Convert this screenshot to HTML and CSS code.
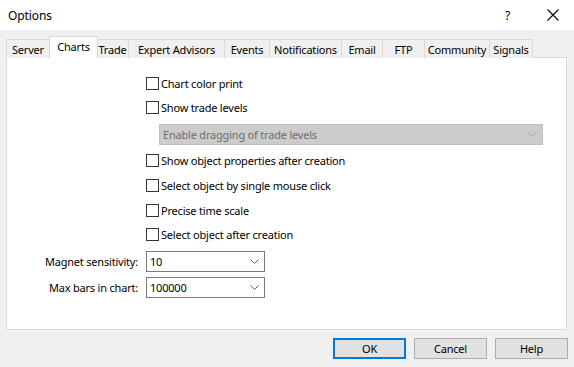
FILE: index.html
```html
<!DOCTYPE html>
<html>
<head>
<meta charset="utf-8">
<link rel="stylesheet" href="styles.css">
</head>
<body>
<div class="window">
  <div class="titlebar">
    <span class="title">Options</span>
    <span class="help-glyph">?</span>
    <svg class="close" width="12" height="12" viewBox="0 0 12 12"><path d="M0.5 0.5 L11.5 11.5 M11.5 0.5 L0.5 11.5" stroke="#000" stroke-width="1.1" fill="none"/></svg>
  </div>
  <div class="client">
    <div class="tabs">
      <div class="tab t-server">Server</div>
      <div class="tab t-charts active">Charts</div>
      <div class="tab t-trade">Trade</div>
      <div class="tab t-ea">Expert Advisors</div>
      <div class="tab t-events">Events</div>
      <div class="tab t-notif">Notifications</div>
      <div class="tab t-email">Email</div>
      <div class="tab t-ftp">FTP</div>
      <div class="tab t-comm">Community</div>
      <div class="tab t-signals">Signals</div>
    </div>
    <div class="panel">
      <div class="checks">
        <label class="row r24"><span class="box"></span>Chart color print</label>
        <label class="row r24"><span class="box"></span>Show trade levels</label>
        <div class="combo disabled wide"><span class="val">Enable dragging of trade levels</span>
          <svg class="chev" width="9" height="5" viewBox="0 0 9 5"><path d="M0.5 0.5 L4.5 4.5 L8.5 0.5" stroke="#a3a3a3" fill="none"/></svg>
        </div>
        <label class="row r25 first"><span class="box"></span>Show object properties after creation</label>
        <label class="row r25"><span class="box"></span>Select object by single mouse click</label>
        <label class="row r24"><span class="box"></span>Precise time scale</label>
        <label class="row r24"><span class="box"></span>Select object after creation</label>
      </div>
      <div class="fields">
        <span class="flabel">Magnet sensitivity:</span>
        <div class="combo small"><span class="val">10</span>
          <svg class="chev" width="9" height="5" viewBox="0 0 9 5"><path d="M0.5 0.5 L4.5 4.5 L8.5 0.5" stroke="#606060" fill="none"/></svg>
        </div>
        <span class="flabel">Max bars in chart:</span>
        <div class="combo small"><span class="val">100000</span>
          <svg class="chev" width="9" height="5" viewBox="0 0 9 5"><path d="M0.5 0.5 L4.5 4.5 L8.5 0.5" stroke="#606060" fill="none"/></svg>
        </div>
      </div>
    </div>
    <div class="buttons">
      <div class="btn default">OK</div>
      <div class="btn">Cancel</div>
      <div class="btn">Help</div>
    </div>
  </div>
</div>
</body>
</html>
```

FILE: styles.css
```css
* { box-sizing: border-box; }
html, body { margin: 0; padding: 0; }
body {
  width: 574px;
  height: 367px;
  overflow: hidden;
  font-family: "Noto Sans", "Open Sans", sans-serif;
  font-size: 11px;
  letter-spacing: -0.2px;
  color: #000;
  background: #f0f0f0;
}
.window { width: 574px; height: 367px; display: flex; flex-direction: column; }
.titlebar {
  height: 30px;
  background: #fff;
  display: flex;
  align-items: center;
  position: relative;
}
.title { margin-left: 8px; font-size: 12px; letter-spacing: -0.1px; }
.help-glyph { position: absolute; left: 505px; top: 7px; font-size: 12px; }
.close { position: absolute; left: 547px; top: 9px; }
.client { flex: 1; background: #f0f0f0; display: flex; flex-direction: column; }
.tabs {
  display: flex;
  height: 28px;
  padding-left: 6px;
  align-items: flex-end;
  margin-bottom: -1px;
  position: relative;
  z-index: 1;
}
.tab {
  height: 19px;
  border: 1px solid #d9d9d9;
  border-left: none;
  border-bottom: none;
  background: #f0f0f0;
  display: flex;
  align-items: center;
  justify-content: center;
  line-height: 1;
  white-space: nowrap;
}
.tab.t-server { border-left: 1px solid #d9d9d9; }
.tab.active {
  height: 22px;
  background: #fff;
  border-left: 1px solid #d9d9d9;
  margin-left: -1px;
  margin-right: -1px;
  padding-bottom: 3px;
  position: relative;
  z-index: 2;
}
.t-server { width: 44px; }
.t-charts { width: 49px; }
.t-trade { width: 32px; }
.t-ea { width: 96px; }
.t-events { width: 45px; }
.t-notif { width: 72px; }
.t-email { width: 41px; }
.t-ftp { width: 42px; }
.t-comm { width: 65px; }
.t-signals { width: 43px; }
.panel {
  margin: 0 7px 0 6px;
  height: 273px;
  background: #fff;
  border: 1px solid #d9d9d9;
  padding: 13px 0 0 139px;
}
.checks { display: flex; flex-direction: column; }
.row { display: flex; align-items: center; }
.r24 { height: 24px; }
.r25 { height: 25px; }
.row.first { margin-top: 3px; }
.box {
  width: 13px;
  height: 13px;
  border: 1px solid #333;
  background: #fff;
  margin-right: 2px;
  flex: none;
}
.combo {
  display: flex;
  align-items: center;
  justify-content: space-between;
  border: 1px solid #7a7a7a;
  background: #fff;
  padding: 0 5px 0 3px;
}
.combo.wide {
  margin-left: 13px;
  margin-top: 5px;
  width: 384px;
  height: 21px;
}
.combo.disabled { background: #cccccc; border-color: #bfbfbf; color: #6d6d6d; }
.combo.small { width: 119px; height: 21px; }
.chev { flex: none; }
.fields {
  display: grid;
  grid-template-columns: 131px 119px;
  column-gap: 8px;
  row-gap: 5px;
  align-items: center;
  margin-left: -139px;
  margin-top: 5px;
}
.flabel { text-align: right; }
.buttons {
  display: flex;
  justify-content: flex-end;
  gap: 8px;
  padding: 8px 6px 0 0;
}
.btn {
  width: 73px;
  height: 21px;
  background: #e1e1e1;
  border: 1px solid #adadad;
  display: flex;
  align-items: center;
  justify-content: center;
}
.btn.default { border: 2px solid #0078d7; }
```
